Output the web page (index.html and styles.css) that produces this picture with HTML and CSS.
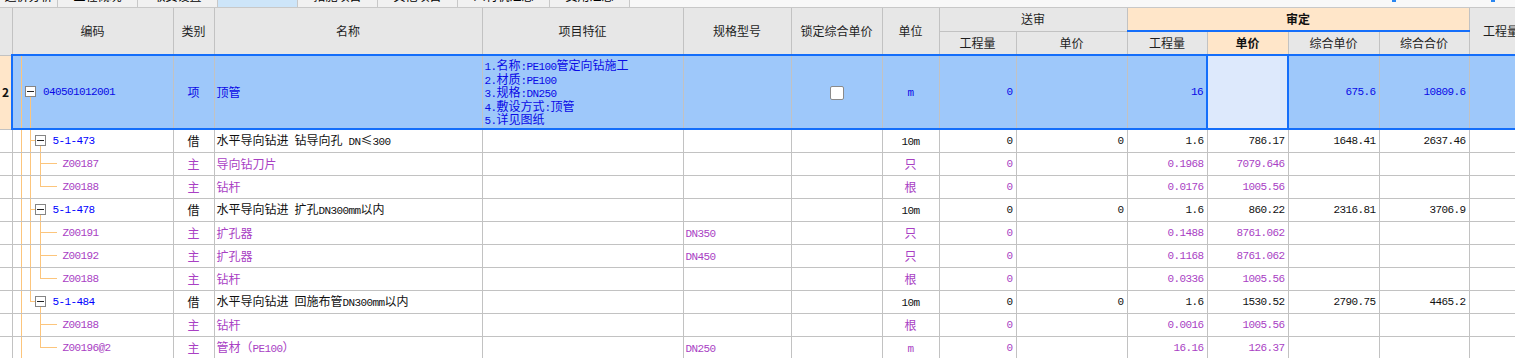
FILE: index.html
```html
<!DOCTYPE html>
<html lang="zh-CN">
<head>
<meta charset="utf-8">
<title>分部分项</title>
<link rel="stylesheet" href="styles.css">
</head>
<body>
<div class="tabs">
  <div class="tab first"><span>造价分析</span></div>
  <div class="tab"><span>工程概况</span></div>
  <div class="tab"><span>取费设置</span></div>
  <div class="tab active"><span>分部分项</span></div>
  <div class="tab"><span>措施项目</span></div>
  <div class="tab"><span>其他项目</span></div>
  <div class="tab wide"><span>人材机汇总</span></div>
  <div class="tab"><span>费用汇总</span></div>
  <div class="tab-rest"><i class="mark m1"></i><i class="mark m2"></i></div>
</div>
<table class="grid">
  <colgroup>
    <col class="w12"><col class="w161"><col class="w41"><col class="w268"><col class="w201"><col class="w108"><col class="w91"><col class="w57"><col class="w77"><col class="w111"><col class="w80"><col class="w81"><col class="w91"><col class="w90"><col class="w64">
  </colgroup>
  <thead>
    <tr class="h1">
      <th rowspan="2" class="rnh"></th>
      <th rowspan="2">编码</th>
      <th rowspan="2">类别</th>
      <th rowspan="2">名称</th>
      <th rowspan="2">项目特征</th>
      <th rowspan="2">规格型号</th>
      <th rowspan="2">锁定综合单价</th>
      <th rowspan="2">单位</th>
      <th colspan="2">送审</th>
      <th colspan="4" class="pk bb">审定</th>
      <th rowspan="2">工程量</th>
    </tr>
    <tr class="h2">
      <th>工程量</th>
      <th>单价</th>
      <th>工程量</th>
      <th class="pk bb">单价</th>
      <th>综合单价</th>
      <th>综合合价</th>
    </tr>
  </thead>
  <tbody>
    <tr class="sel">
      <td class="rn">2</td>
      <td class="code"><div class="tr"><svg class="tl" width="30" height="72"><path d="M8.5 0V72M17.5 41V72"/><rect class="bx" x="12.5" y="30.5" width="10" height="10"/><path class="mn" d="M14 35.5H21"/></svg><span class="a">040501012001</span></div></td>
      <td class="c">项</td>
      <td class="nm">顶管</td>
      <td class="f">
        <div class="ln"><span class="a">1.</span>名称<span class="a">:PE100</span>管定向钻施工</div>
        <div class="ln"><span class="a">2.</span>材质<span class="a">:PE100</span></div>
        <div class="ln"><span class="a">3.</span>规格<span class="a">:DN250</span></div>
        <div class="ln"><span class="a">4.</span>敷设方式<span class="a">:</span>顶管</div>
        <div class="ln"><span class="a">5.</span>详见图纸</div>
      </td>
      <td></td>
      <td class="c"><span class="cb"></span></td>
      <td class="c"><span class="a">m</span></td>
      <td class="n">0</td>
      <td class="n"></td>
      <td class="n">16</td>
      <td class="selc"></td>
      <td class="n">675.6</td>
      <td class="n">10809.6</td>
      <td></td>
    </tr>
    <tr class="p">
      <td class="rn"></td>
      <td class="code"><div class="tr"><svg class="tl" width="40" height="22"><path d="M8.5 0V22M17.5 0V22M17.5 10.5H22M27.5 16V22"/><rect class="bx" x="22.5" y="5.5" width="10" height="10"/><path class="mn" d="M24 10.5H31"/></svg><span class="a">5-1-473</span></div></td>
      <td class="c">借</td>
      <td class="nm">水平导向钻进<span class="a"> </span>钻导向孔<span class="a"> DN</span>≤<span class="a">300</span></td>
      <td></td><td></td><td></td>
      <td class="c"><span class="a">10m</span></td>
      <td class="n">0</td><td class="n">0</td><td class="n">1.6</td><td class="n">786.17</td><td class="n">1648.41</td><td class="n">2637.46</td><td></td>
    </tr>
    <tr class="ch">
      <td class="rn"></td>
      <td class="code"><div class="tr"><svg class="tl" width="50" height="22"><path d="M8.5 0V22M17.5 0V22M27.5 0V22M27.5 10.5H44"/></svg><span class="a">Z00187</span></div></td>
      <td class="c">主</td>
      <td class="nm">导向钻刀片</td>
      <td></td><td></td><td></td>
      <td class="c">只</td>
      <td class="n">0</td><td class="n"></td><td class="n">0.1968</td><td class="n">7079.646</td><td></td><td></td><td></td>
    </tr>
    <tr class="ch">
      <td class="rn"></td>
      <td class="code"><div class="tr"><svg class="tl" width="50" height="22"><path d="M8.5 0V22M17.5 0V22M27.5 0V10.5M27.5 10.5H44"/></svg><span class="a">Z00188</span></div></td>
      <td class="c">主</td>
      <td class="nm">钻杆</td>
      <td></td><td></td><td></td>
      <td class="c">根</td>
      <td class="n">0</td><td class="n"></td><td class="n">0.0176</td><td class="n">1005.56</td><td></td><td></td><td></td>
    </tr>
    <tr class="p">
      <td class="rn"></td>
      <td class="code"><div class="tr"><svg class="tl" width="40" height="22"><path d="M8.5 0V22M17.5 0V22M17.5 10.5H22M27.5 16V22"/><rect class="bx" x="22.5" y="5.5" width="10" height="10"/><path class="mn" d="M24 10.5H31"/></svg><span class="a">5-1-478</span></div></td>
      <td class="c">借</td>
      <td class="nm">水平导向钻进<span class="a"> </span>扩孔<span class="a">DN300mm</span>以内</td>
      <td></td><td></td><td></td>
      <td class="c"><span class="a">10m</span></td>
      <td class="n">0</td><td class="n">0</td><td class="n">1.6</td><td class="n">860.22</td><td class="n">2316.81</td><td class="n">3706.9</td><td></td>
    </tr>
    <tr class="ch">
      <td class="rn"></td>
      <td class="code"><div class="tr"><svg class="tl" width="50" height="22"><path d="M8.5 0V22M17.5 0V22M27.5 0V22M27.5 10.5H44"/></svg><span class="a">Z00191</span></div></td>
      <td class="c">主</td>
      <td class="nm">扩孔器</td>
      <td></td>
      <td class="sp"><span class="a">DN350</span></td>
      <td></td>
      <td class="c">只</td>
      <td class="n">0</td><td class="n"></td><td class="n">0.1488</td><td class="n">8761.062</td><td></td><td></td><td></td>
    </tr>
    <tr class="ch">
      <td class="rn"></td>
      <td class="code"><div class="tr"><svg class="tl" width="50" height="22"><path d="M8.5 0V22M17.5 0V22M27.5 0V22M27.5 10.5H44"/></svg><span class="a">Z00192</span></div></td>
      <td class="c">主</td>
      <td class="nm">扩孔器</td>
      <td></td>
      <td class="sp"><span class="a">DN450</span></td>
      <td></td>
      <td class="c">只</td>
      <td class="n">0</td><td class="n"></td><td class="n">0.1168</td><td class="n">8761.062</td><td></td><td></td><td></td>
    </tr>
    <tr class="ch">
      <td class="rn"></td>
      <td class="code"><div class="tr"><svg class="tl" width="50" height="22"><path d="M8.5 0V22M17.5 0V22M27.5 0V10.5M27.5 10.5H44"/></svg><span class="a">Z00188</span></div></td>
      <td class="c">主</td>
      <td class="nm">钻杆</td>
      <td></td><td></td><td></td>
      <td class="c">根</td>
      <td class="n">0</td><td class="n"></td><td class="n">0.0336</td><td class="n">1005.56</td><td></td><td></td><td></td>
    </tr>
    <tr class="p">
      <td class="rn"></td>
      <td class="code"><div class="tr"><svg class="tl" width="40" height="22"><path d="M8.5 0V22M17.5 0V10.5M17.5 10.5H22M27.5 16V22"/><rect class="bx" x="22.5" y="5.5" width="10" height="10"/><path class="mn" d="M24 10.5H31"/></svg><span class="a">5-1-484</span></div></td>
      <td class="c">借</td>
      <td class="nm">水平导向钻进<span class="a"> </span>回施布管<span class="a">DN300mm</span>以内</td>
      <td></td><td></td><td></td>
      <td class="c"><span class="a">10m</span></td>
      <td class="n">0</td><td class="n">0</td><td class="n">1.6</td><td class="n">1530.52</td><td class="n">2790.75</td><td class="n">4465.2</td><td></td>
    </tr>
    <tr class="ch">
      <td class="rn"></td>
      <td class="code"><div class="tr"><svg class="tl" width="50" height="22"><path d="M8.5 0V22M27.5 0V22M27.5 10.5H44"/></svg><span class="a">Z00188</span></div></td>
      <td class="c">主</td>
      <td class="nm">钻杆</td>
      <td></td><td></td><td></td>
      <td class="c">根</td>
      <td class="n">0</td><td class="n"></td><td class="n">0.0016</td><td class="n">1005.56</td><td></td><td></td><td></td>
    </tr>
    <tr class="ch">
      <td class="rn"></td>
      <td class="code"><div class="tr"><svg class="tl" width="50" height="22"><path d="M8.5 0V22M27.5 0V10.5M27.5 10.5H44"/></svg><span class="a">Z00196@2</span></div></td>
      <td class="c">主</td>
      <td class="nm">管材（<span class="a">PE100</span>）</td>
      <td></td>
      <td class="sp"><span class="a">DN250</span></td>
      <td></td>
      <td class="c"><span class="a">m</span></td>
      <td class="n">0</td><td class="n"></td><td class="n">16.16</td><td class="n">126.37</td><td></td><td></td><td></td>
    </tr>
  </tbody>
</table>
</body>
</html>
```

FILE: styles.css
```css
html, body {
  margin: 0;
  padding: 0;
  background: #ffffff;
  overflow: hidden;
}
body {
  font: 12px "Noto Sans CJK SC", "Noto Sans", sans-serif;
  color: #111111;
}

/* top tab strip (cut off) */
.tabs {
  display: flex;
  height: 7px;
  border-bottom: 1px solid #c8c8c8;
  background: #f8f8f8;
  overflow: hidden;
}
.tab {
  box-sizing: border-box;
  width: 80px;
  flex: none;
  border-right: 1px solid #c8c8c8;
  background: #f1f1f1;
  display: flex;
  justify-content: center;
}
.tab span {
  display: block;
  line-height: 14px;
  margin-top: -11px;
  color: #000;
}
.tab.first { width: 58px; }
.tab.wide { width: 92px; }
.tab.active { background: #cde5f9; }
.tab.active span { margin-top: -15px; }
.tab-rest {
  flex: 1;
  display: flex;
  align-items: flex-start;
}
.mark {
  display: block;
  width: 4px;
  height: 2px;
  background: #2a86f0;
}
.m1 { margin-left: 762px; }
.m2 { margin-left: 95px; }

/* grid */
.grid {
  border-collapse: collapse;
  table-layout: fixed;
  width: 1533px;
}
.w12 { width: 12px; }
.w161 { width: 161px; }
.w41 { width: 41px; }
.w268 { width: 268px; }
.w201 { width: 201px; }
.w108 { width: 108px; }
.w91 { width: 91px; }
.w57 { width: 57px; }
.w77 { width: 77px; }
.w111 { width: 111px; }
.w80 { width: 80px; }
.w81 { width: 81px; }
.w90 { width: 90px; }
.w64 { width: 64px; }

.grid th, .grid td {
  border: 1px solid #c2c2c2;
  padding: 0;
  overflow: hidden;
  white-space: nowrap;
}
.grid th {
  background: #e7e7e7;
  font-weight: normal;
  color: #1e1e1e;
  text-align: center;
  line-height: 16px;
}
.grid thead tr.h1 th { border-top: none; }
.grid th.rnh { border-left: none; }
.grid td.rn { border-left: none; }
.h1 { height: 23px; }
.h2 { height: 24px; }
.grid th.pk {
  background: #ffe6c9;
  font-weight: bold;
  color: #111;
}
.grid th.bb { border-bottom: 2px solid #146efa; }

.grid tbody tr { height: 23px; }
.grid tbody td { line-height: 16px; }

.a {
  font-family: "Liberation Mono", "DejaVu Sans Mono", monospace;
  font-size: 11px;
  letter-spacing: -0.6px;
}
.c { text-align: center; }
.nm { padding-left: 2px !important; }
.sp { padding-left: 2px !important; }
.grid td.n {
  text-align: right;
  padding-right: 3px;
  font-family: "Liberation Mono", "DejaVu Sans Mono", monospace;
  font-size: 11px;
  letter-spacing: -0.6px;
}

/* tree */
.tr {
  display: flex;
  align-items: center;
}
.tl {
  display: block;
  flex: none;
}
.tl path {
  fill: none;
  stroke: #fcc57c;
  stroke-width: 1;
  shape-rendering: crispEdges;
}
.tl .bx {
  fill: #ffffff;
  stroke: #858585;
  stroke-width: 1;
  shape-rendering: crispEdges;
}
.tl path.mn { stroke: #222222; }

/* row kinds */
tr.p { color: #111111; }
tr.p .code { color: #0000ff; }
tr.ch { color: #a93fc4; }

/* selected row */
tr.sel td {
  background: #9ec8fa;
  color: #0a0ae6;
  border-top: 2px solid #146efa;
  border-bottom: 2px solid #146efa;
}
tr.sel { height: 75px; }
tr.sel td.rn {
  background: #ffe6c9;
  color: #111;
  font-weight: bold;
  text-align: center;
  border-top: 1px solid #c2c2c2;
  border-bottom: 1px solid #c2c2c2;
}
tr.sel td.code { border-left: 2px solid #146efa; }
tr.sel td.selc {
  background: #dde9fc;
  border-left: 2px solid #146efa;
  border-right: 2px solid #146efa;
}
.f { padding-left: 2px !important; }
.ln {
  line-height: 13.6px;
  height: 13.6px;
}
.cb {
  display: inline-block;
  width: 12px;
  height: 12px;
  border: 1px solid #8a8a8a;
  border-radius: 2px;
  background: #ffffff;
  vertical-align: middle;
}
```
